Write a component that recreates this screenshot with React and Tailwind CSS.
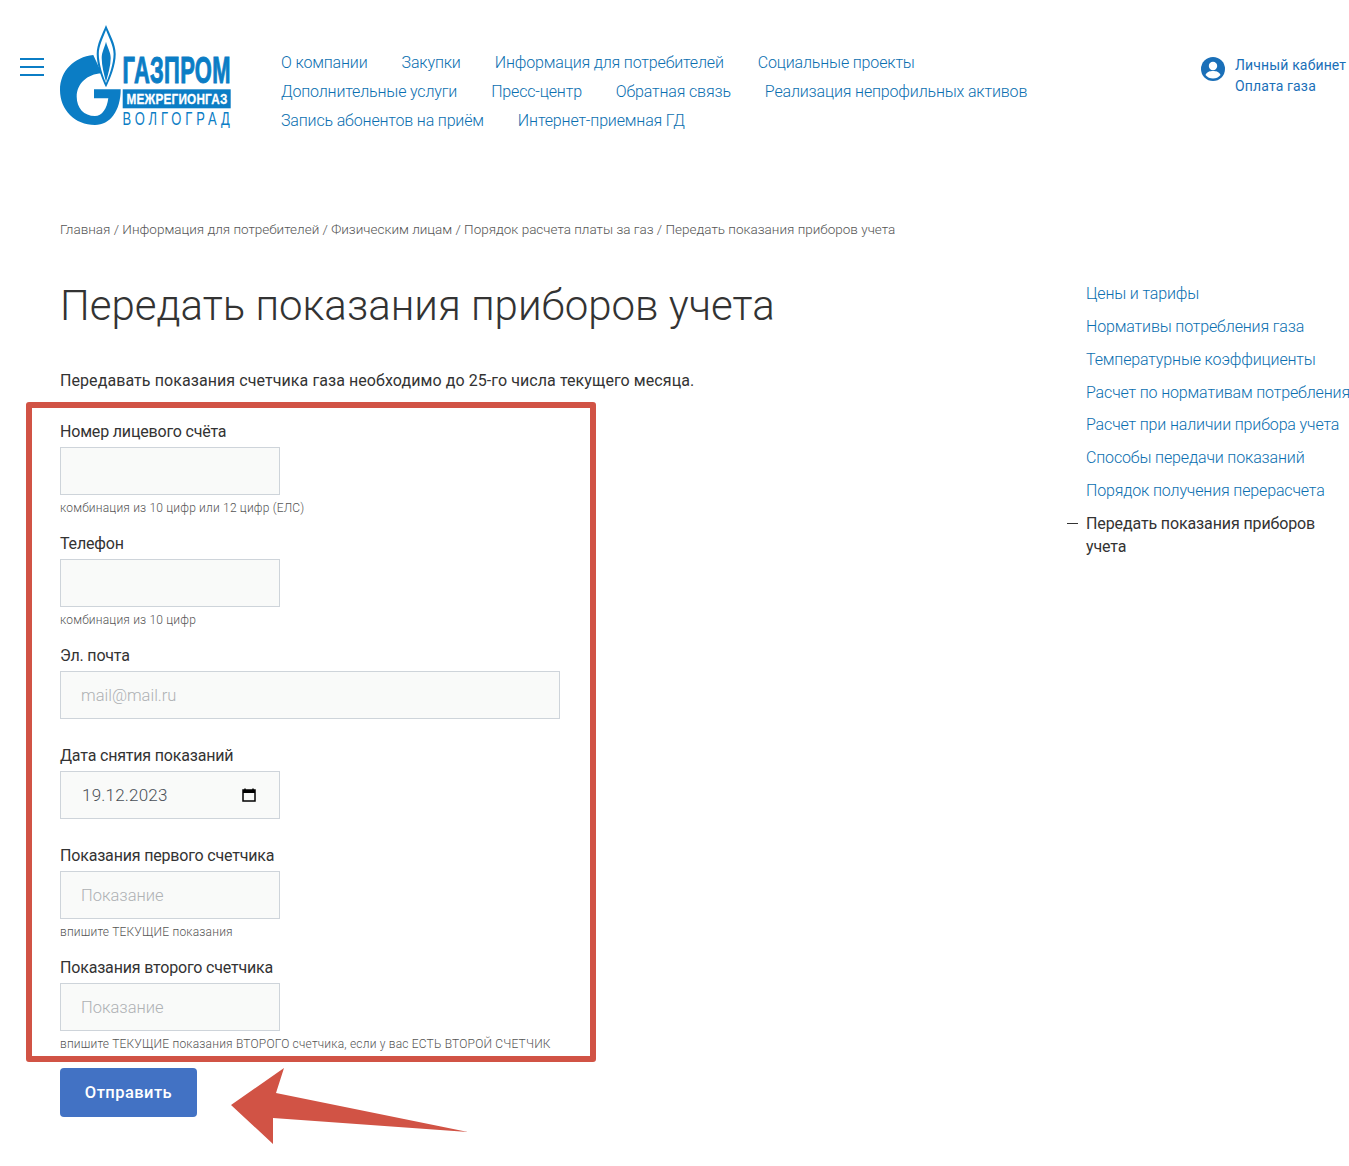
import React from "react";

const nav = [
  ["О компании", "Закупки", "Информация для потребителей", "Социальные проекты"],
  ["Дополнительные услуги", "Пресс-центр", "Обратная связь", "Реализация непрофильных активов"],
  ["Запись абонентов на приём", "Интернет-приемная ГД"],
];
const side = [
  "Цены и тарифы",
  "Нормативы потребления газа",
  "Температурные коэффициенты",
  "Расчет по нормативам потребления",
  "Расчет при наличии прибора учета",
  "Способы передачи показаний",
  "Порядок получения перерасчета",
];

function Logo() {
  return (
    <svg width="174" height="104" viewBox="0 0 174 104" className="shrink-0">
      <path d="M46 1 C42 11 36.700 20 36.700 30 C36.700 42 42 55 46 63.300 C50 55 55.700 42 55.700 30 C55.700 20 50 11 46 1 Z" fill="#0b7dc5" />
      <path d="M46 6 C43 14 38.800 22 38.800 30 C38.800 40 43 52 46 59 C49 52 53.600 40 53.600 30 C53.600 22 49 14 46 6 Z" fill="#fff" />
      <path d="M46 17.700 C44.500 24 41.700 28 41.700 34 C41.700 42 44 50 46 58 C48 50 50.700 42 50.700 34 C50.700 28 47.500 24 46 17.700 Z" fill="#0b7dc5" />
      <path d="M33.300 31 C14 33 0 47 0 66 C0 86 15 101 35 101 C50 101 60.700 87 60.700 65.300 L34 65.300 L34 74.300 L48.300 74.300 C47 85 42 92 35 92 C24 92 16.700 84 16.700 72.700 C16.700 60 27 50 41.700 49.300 Z" fill="#0b7dc5" />
      <text transform="translate(62.500 59.300) scale(0.6 1)" fontFamily="Liberation Sans, sans-serif" fontWeight="700" fontSize="36.500" fill="#0b7dc5" stroke="#0b7dc5" strokeWidth="1" textLength="180">ГАЗПРОМ</text>
      <rect x="62.700" y="65.300" width="108" height="19" fill="#0b7dc5" />
      <text transform="translate(66.500 80) scale(0.8 1)" fontFamily="Liberation Sans, sans-serif" fontWeight="700" fontSize="14.700" fill="#fff" stroke="#fff" strokeWidth="0.300" textLength="126">МЕЖРЕГИОНГАЗ</text>
      <text transform="translate(62.500 101) scale(0.72 1)" fontFamily="Liberation Sans, sans-serif" fontSize="18" fill="#0b7dc5" textLength="149">ВОЛГОГРАД</text>
    </svg>
  );
}

function Field({ label, hint, wide, placeholder, date }) {
  return (
    <div className={hint ? "mb-0" : "mb-6"}>
      <label className="block h-6 mb-1 text-base leading-[26px] tracking-[-0.18px] text-[#333]">{label}</label>
      {date ? (
        <div className="flex h-12 w-[220px] items-center border border-[#ced4da] bg-[#f9faf9] pl-[21px] pr-[23px] pt-[2px]">
          <span className="flex-1 text-[17px] font-light tracking-[0.2px] text-[#495057]">19.12.2023</span>
          <svg width="14" height="14" viewBox="0 0 14 14" className="-mt-[2px]">
            <path d="M3 0.500 V3 M11 0.500 V3" stroke="#000" strokeWidth="1.500" />
            <rect x="1" y="2" width="12" height="11" fill="none" stroke="#000" strokeWidth="1.500" />
            <rect x="1" y="2" width="12" height="3" fill="#000" />
          </svg>
        </div>
      ) : (
        <div className={`flex h-12 items-center border border-[#ced4da] bg-[#f9faf9] px-5 pt-[2px] text-[16.500px] font-light text-[#aeb1b4] ${wide ? "w-[500px]" : "w-[220px]"}`}>
          {placeholder}
        </div>
      )}
      {hint && <div className="h-9 pt-[4px] text-xs font-light leading-[18px] tracking-[0.19px] text-[#555]">{hint}</div>}
    </div>
  );
}

export default function App() {
  return (
    <div className="relative h-[1166px] w-[1349px] overflow-hidden bg-white font-['Roboto',sans-serif] text-[#333]">
      <header className="flex h-[160px] items-start">
        <div className="ml-5 mt-[58px] flex w-6 flex-col gap-[6px]">
          <span className="h-[2px] bg-[#0b7dc5]" />
          <span className="h-[2px] bg-[#0b7dc5]" />
          <span className="h-[2px] bg-[#0b7dc5]" />
        </div>
        <div className="ml-4 mt-6"><Logo /></div>
        <nav className="ml-[47px] mt-[48px] w-[860px] text-base font-light leading-[29px] tracking-[-0.16px] text-[#0b6fb0]">
          {nav.map((row, i) => (
            <div key={i} className="flex gap-[34px]">
              {row.map((t) => <a key={t}>{t}</a>)}
            </div>
          ))}
        </nav>
        <div className="ml-auto mt-[55px] flex">
          <svg width="24" height="24" viewBox="0 0 24 24" className="mr-[10px] mt-[2px]">
            <circle cx="12" cy="12" r="12" fill="#1a6fb8" />
            <circle cx="12" cy="9" r="4.200" fill="#fff" />
            <path d="M4.500 18 C6 14.500 9 14 12 14 C15 14 18 14.500 19.500 18 C17.500 20.500 15 21.500 12 21.500 C9 21.500 6.500 20.500 4.500 18 Z" fill="#fff" />
          </svg>
          <div className="w-[114px] text-sm leading-[21px] tracking-[0.15px] text-[#1a6fb8]">
            <div className="whitespace-nowrap">Личный кабинет</div>
            <div className="whitespace-nowrap">Оплата газа</div>
          </div>
        </div>
      </header>

      <div className="flex">
        <main className="ml-[60px] w-[1006px]">
          <div className="mt-[60px] text-[13.500px] font-light leading-[19px] text-[#555]">
            Главная / Информация для потребителей / Физическим лицам / Порядок расчета платы за газ / Передать показания приборов учета
          </div>
          <h1 className="mt-[39px] text-[42px] font-light leading-[56px] text-[#333]">Передать показания приборов учета</h1>
          <p className="mt-[35px] mb-[26px] text-base leading-6 tracking-[0.08px] text-[#333]">Передавать показания счетчика газа необходимо до 25-го числа текущего месяца.</p>
          <form>
            <Field label="Номер лицевого счёта" hint="комбинация из 10 цифр или 12 цифр (ЕЛС)" />
            <Field label="Телефон" hint="комбинация из 10 цифр" />
            <Field label="Эл. почта" wide placeholder="mail@mail.ru" />
            <Field label="Дата снятия показаний" date />
            <Field label="Показания первого счетчика" placeholder="Показание" hint="впишите ТЕКУЩИЕ показания" />
            <Field label="Показания второго счетчика" placeholder="Показание" hint="впишите ТЕКУЩИЕ показания ВТОРОГО счетчика, если у вас ЕСТЬ ВТОРОЙ СЧЕТЧИК" />
            <button type="button" className="mt-[1px] h-[49px] w-[137px] rounded bg-[#4272c4] pt-[2px] text-[16.500px] font-medium tracking-[0.45px] text-white">Отправить</button>
          </form>
        </main>
        <aside className="relative w-[283px] shrink-0 pl-[20px] pt-[122px] text-base font-light leading-[23px] tracking-[-0.15px] text-[#0b6fb0]">
          {side.map((t) => <div key={t} className="mb-[9.850px] whitespace-nowrap">{t}</div>)}
          <div className="relative font-normal tracking-[-0.12px] text-[#333]">
            <span className="absolute -left-[19px] top-[11px] h-px w-[11px] bg-[#333]" />
            Передать показания приборов учета
          </div>
        </aside>
      </div>

      <div className="absolute left-[26px] top-[402px] h-[660px] w-[570px] rounded-[3px] border-[6px] border-[#d15345]" />
      <svg className="absolute left-[230px] top-[1066px]" width="240" height="80" viewBox="0 0 240 80">
        <path d="M1 39 L54 2 L46 27 L238 66 L43 52 L43 78 Z" fill="#d15345" />
      </svg>
    </div>
  );
}
